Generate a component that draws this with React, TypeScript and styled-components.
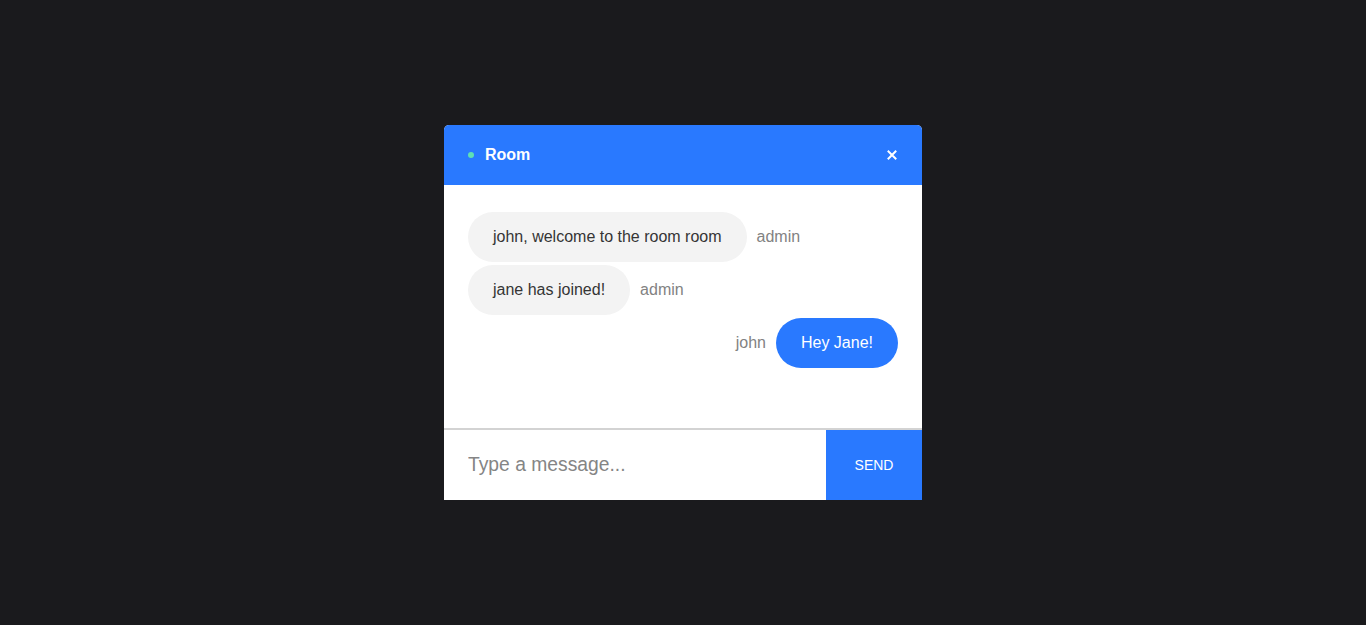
import React from "react";
import styled, { createGlobalStyle } from "styled-components";

const Global = createGlobalStyle`
  html, body { margin: 0; padding: 0; background: #1a1a1d; }
  body { font-family: "Liberation Sans", Arial, sans-serif; }
  * { box-sizing: border-box; }
`;

const Page = styled.div`
  min-height: 100vh;
  display: flex;
  align-items: center;
  justify-content: center;
`;

const Card = styled.div`
  width: 478px;
  height: 375px;
  display: flex;
  flex-direction: column;
  background: #fff;
  border-radius: 5px 5px 0 0;
  overflow: hidden;
`;

const Header = styled.div`
  height: 60px;
  flex: none;
  background: #2979ff;
  display: flex;
  align-items: center;
  padding: 0 24px;
  color: #fff;
`;

const Dot = styled.span`
  width: 6px;
  height: 6px;
  border-radius: 50%;
  background: #5fe0b4;
  margin-right: 11px;
`;

const Title = styled.h3`
  margin: 0;
  font-size: 16px;
  font-weight: 700;
  flex: 1;
`;

const Close = styled.button`
  border: 0;
  background: none;
  padding: 0;
  display: flex;
  margin-right: 1px;
`;

const Messages = styled.div`
  flex: 1;
  padding: 27px 24px 0;
  display: flex;
  flex-direction: column;
  gap: 3px;
`;

const Row = styled.div<{ $mine?: boolean }>`
  display: flex;
  align-items: center;
  flex-direction: ${(p) => (p.$mine ? "row-reverse" : "row")};
  justify-content: flex-start;
`;

const Bubble = styled.div<{ $mine?: boolean }>`
  height: 50px;
  line-height: 50px;
  padding: 0 25px;
  border-radius: 25px;
  font-size: 16px;
  background: ${(p) => (p.$mine ? "#2979ff" : "#f3f3f3")};
  color: ${(p) => (p.$mine ? "#fff" : "#353535")};
`;

const Sender = styled.span<{ $mine?: boolean }>`
  font-size: 16px;
  color: #828282;
  margin: ${(p) => (p.$mine ? "0 10px 0 0" : "0 0 0 10px")};
`;

const Form = styled.form`
  flex: none;
  display: flex;
  height: 72px;
  border-top: 2px solid #d3d3d3;
  margin: 0;
`;

const Input = styled.input`
  flex: 1;
  border: 0;
  outline: none;
  padding: 0 24px;
  font-family: "Liberation Sans", Arial, sans-serif;
  font-size: 19.3px;
  color: #333;
  &::placeholder { color: #858585; }
`;

const Send = styled.button`
  width: 96px;
  border: 0;
  background: #2979ff;
  color: #fff;
  font-family: "Liberation Sans", Arial, sans-serif;
  font-size: 14px;
  text-transform: uppercase;
  padding: 0;
`;

const messages = [
  { user: "admin", text: "john, welcome to the room room", mine: false },
  { user: "admin", text: "jane has joined!", mine: false },
  { user: "john", text: "Hey Jane!", mine: true },
];

export default function App() {
  return (
    <>
      <Global />
      <Page>
        <Card>
          <Header>
            <Dot />
            <Title>Room</Title>
            <Close aria-label="close">
              <svg width="10" height="10" viewBox="0 0 10 10">
                <path d="M1.5 1.5 L8.5 8.5 M8.5 1.5 L1.5 8.5" stroke="#fff" strokeWidth="2" strokeLinecap="square" />
              </svg>
            </Close>
          </Header>
          <Messages>
            {messages.map((m, i) => (
              <Row key={i} $mine={m.mine}>
                <Bubble $mine={m.mine}>{m.text}</Bubble>
                <Sender $mine={m.mine}>{m.user}</Sender>
              </Row>
            ))}
          </Messages>
          <Form onSubmit={(e) => e.preventDefault()}>
            <Input placeholder="Type a message..." />
            <Send type="submit">Send</Send>
          </Form>
        </Card>
      </Page>
    </>
  );
}
